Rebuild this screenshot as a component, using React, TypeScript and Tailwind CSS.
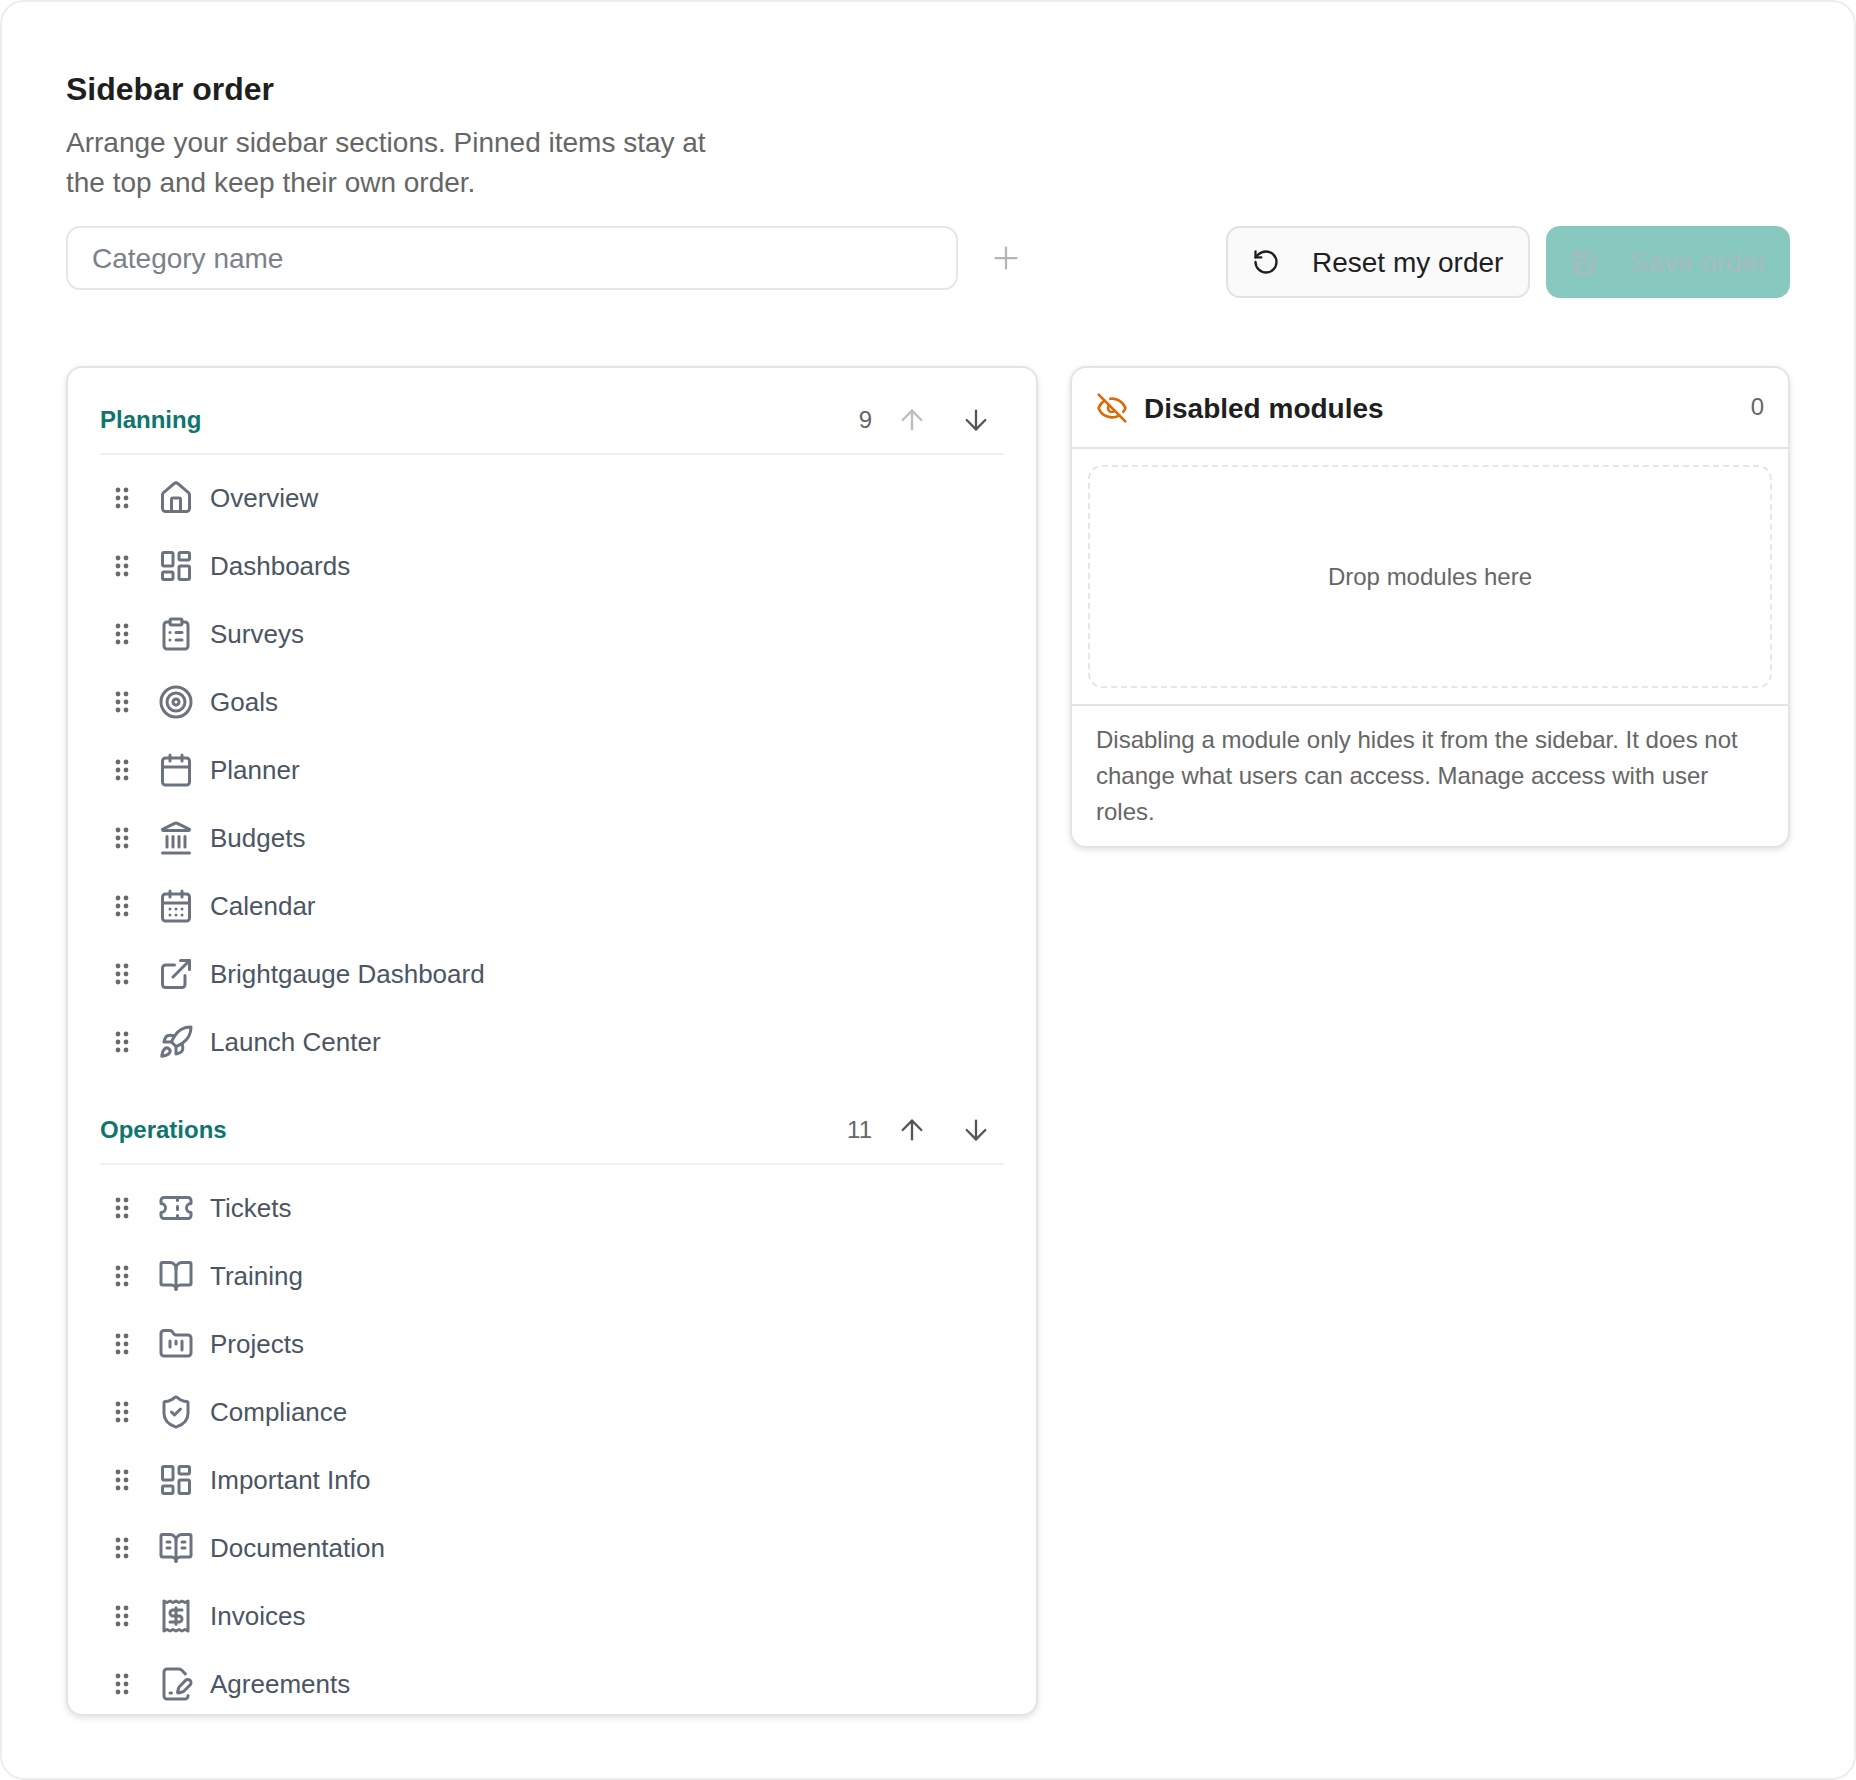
import {
  ArrowDown,
  ArrowUp,
  BookOpen,
  BookOpenText,
  Calendar,
  CalendarDays,
  ClipboardList,
  ExternalLink,
  EyeOff,
  FileSignature,
  FolderKanban,
  House,
  Landmark,
  LayoutDashboard,
  Plus,
  Receipt,
  Rocket,
  RotateCcw,
  Save,
  ShieldCheck,
  Target,
  Ticket,
} from 'lucide-react'

const sections = [
  {
    title: 'Planning',
    count: 9,
    upDisabled: true,
    items: [
      { label: 'Overview', icon: House },
      { label: 'Dashboards', icon: LayoutDashboard },
      { label: 'Surveys', icon: ClipboardList },
      { label: 'Goals', icon: Target },
      { label: 'Planner', icon: Calendar },
      { label: 'Budgets', icon: Landmark },
      { label: 'Calendar', icon: CalendarDays },
      { label: 'Brightgauge Dashboard', icon: ExternalLink },
      { label: 'Launch Center', icon: Rocket },
    ],
  },
  {
    title: 'Operations',
    count: 11,
    upDisabled: false,
    items: [
      { label: 'Tickets', icon: Ticket },
      { label: 'Training', icon: BookOpen },
      { label: 'Projects', icon: FolderKanban },
      { label: 'Compliance', icon: ShieldCheck },
      { label: 'Important Info', icon: LayoutDashboard },
      { label: 'Documentation', icon: BookOpenText },
      { label: 'Invoices', icon: Receipt },
      { label: 'Agreements', icon: FileSignature },
    ],
  },
]

function DragDots() {
  return (
    <svg width="28" height="28" viewBox="0 0 28 28" className="shrink-0 text-[#6a6a6a]" fill="currentColor">
      <circle cx="10" cy="6" r="2.4" />
      <circle cx="18" cy="6" r="2.4" />
      <circle cx="10" cy="14" r="2.4" />
      <circle cx="18" cy="14" r="2.4" />
      <circle cx="10" cy="22" r="2.4" />
      <circle cx="18" cy="22" r="2.4" />
    </svg>
  )
}

export default function App() {
  return (
    <div className="h-[1780px] w-[1856px] overflow-hidden rounded-[24px] border-2 border-[#ededed] bg-white px-[64px] pt-[64px] font-['Liberation_Sans',Arial,sans-serif]">
      {/* Header */}
      <h1 className="text-[32px] leading-[46px] font-bold text-[#1f1f1f]">Sidebar order</h1>
      <p className="mt-[11px] w-[680px] text-[28px] leading-[40px] text-[#666666]">
        Arrange your sidebar sections. Pinned items stay at the top and keep their own order.
      </p>

      {/* Category input and actions */}
      <div className="mt-[23px] flex items-start">
        <div className="flex h-[64px] items-center">
          <input
            placeholder="Category name"
            className="h-[64px] w-[892px] rounded-[14px] border-2 border-[#e6e6e6] bg-white px-[24px] pt-[2px] text-[28px] outline-none placeholder:text-[#7b818b]"
          />
          <button disabled className="ml-[30px] text-[#b4b4b4]">
            <Plus size={36} strokeWidth={1.5} />
          </button>
        </div>
        <div className="ml-auto flex gap-[16px]">
          <button className="flex h-[72px] w-[304px] items-center gap-[32px] rounded-[14px] border-2 border-[#e3e3e3] bg-[#fafafa] pl-[24px] text-[28px] text-[#1f1f1f]">
            <RotateCcw size={28} strokeWidth={2} />
            <span className="pt-[2px]">Reset my order</span>
          </button>
          <button
            disabled
            className="flex h-[72px] w-[244px] items-center gap-[31px] rounded-[14px] bg-[#88c9bf] pl-[24px] text-[28px] text-[#a9bac0]"
          >
            <Save size={28} strokeWidth={2} />
            <span className="pt-[2px]">Save order</span>
          </button>
        </div>
      </div>

      <div className="mt-[68px] flex items-start gap-[32px]">
        {/* Enabled sections */}
        <div className="h-[1350px] flex-1 overflow-hidden rounded-[16px] border-2 border-[#e4e4e4] bg-white px-[32px] shadow-[0_2px_6px_rgba(0,0,0,0.12)]">
          {sections.map((section) => (
            <section key={section.title} className="mb-[2px]">
              <div className="flex h-[87px] items-center border-b-2 border-[#f0f0f0] pt-[19px]">
                <h2 className="text-[24px] font-bold text-[#0f766e]">{section.title}</h2>
                <span className="ml-auto text-[24px] text-[#666666]">{section.count}</span>
                <div className="ml-[24px] flex gap-[32px] pr-[12px]">
                  <ArrowUp size={32} strokeWidth={1.75} className={section.upDisabled ? 'text-[#bdbdbd]' : 'text-[#555555]'} />
                  <ArrowDown size={32} strokeWidth={1.75} className="text-[#555555]" />
                </div>
              </div>
              <ul className="mt-[9px]">
                {section.items.map((item) => (
                  <li key={item.label} className="flex h-[68px] items-center pl-[8px]">
                    <DragDots />
                    <item.icon size={36} strokeWidth={2} className="ml-[22px] shrink-0 text-[#6b7280]" />
                    <span className="ml-[16px] text-[26px] text-[#4b5563]">{item.label}</span>
                  </li>
                ))}
              </ul>
            </section>
          ))}
        </div>

        {/* Disabled modules */}
        <div className="w-[720px] overflow-hidden rounded-[16px] border-2 border-[#e4e4e4] bg-white shadow-[0_2px_6px_rgba(0,0,0,0.12)]">
          <div className="flex h-[81px] items-center gap-[16px] border-b-2 border-[#e4e4e4] px-[24px]">
            <EyeOff size={32} strokeWidth={2} className="mt-[1px] text-[#d96c06]" />
            <h2 className="mt-[3px] text-[28px] font-bold text-[#1f1f1f]">Disabled modules</h2>
            <span className="mb-[1px] ml-auto text-[24px] text-[#666666]">0</span>
          </div>
          <div className="p-[16px]">
            <div className="flex h-[223px] items-center justify-center rounded-[14px] border-2 border-dashed border-[#e6e6e6] text-[24px] text-[#666666]">
              Drop modules here
            </div>
          </div>
          <p className="border-t-2 border-[#e4e4e4] px-[24px] py-[16px] text-[24px] leading-[36px] text-[#666666]">
            Disabling a module only hides it from the sidebar. It does not change what users can access. Manage access with user roles.
          </p>
        </div>
      </div>
    </div>
  )
}
